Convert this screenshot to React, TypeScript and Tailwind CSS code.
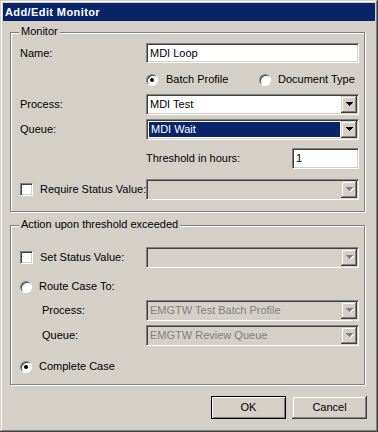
import React from 'react';

const raised =
  'bg-[#d4d0c8] shadow-[inset_-1px_-1px_#404040,inset_1px_1px_#d4d0c8,inset_-2px_-2px_#808080,inset_2px_2px_#ffffff]';
const sunken =
  'border border-[#808080] border-r-white border-b-white shadow-[inset_1px_1px_#404040,inset_-1px_-1px_#d4d0c8]';

function Arrow({ disabled }: { disabled?: boolean }) {
  const d = 'M0 0h7v1H0z M1 1h5v1H1z M2 2h3v1H2z M3 3h1v1H3z';
  return (
    <svg width="8" height="5" viewBox="0 0 8 5" shapeRendering="crispEdges">
      {disabled && <path d={d} fill="#ffffff" transform="translate(1 1)" />}
      <path d={d} fill={disabled ? '#808080' : '#000000'} />
    </svg>
  );
}

function Combo({
  value,
  width = 213,
  disabled,
  selected,
}: {
  value?: string;
  width?: number;
  disabled?: boolean;
  selected?: boolean;
}) {
  return (
    <div
      className={`flex h-[21px] shrink-0 whitespace-nowrap ${sunken} ${disabled ? 'bg-[#d4d0c8] text-[#808080]' : 'bg-white text-black'}`}
      style={{ width }}
    >
      {selected ? (
        <div className="flex-1 ml-[2px] my-[2px] mr-[1px] bg-[#0a246a] text-white flex items-center pl-[2px] leading-none">
          {value}
        </div>
      ) : (
        <div className="flex-1 flex items-center pl-[3px] leading-none">{value}</div>
      )}
      <div className={`w-[16px] h-[17px] mt-[1px] mr-[1px] flex items-center justify-center pl-[1px] ${raised}`}>
        <Arrow disabled={disabled} />
      </div>
    </div>
  );
}

function Edit({ value, width }: { value: string; width: number }) {
  return (
    <div className={`h-[20px] shrink-0 bg-white flex items-center pl-[3px] leading-none ${sunken}`} style={{ width }}>
      {value}
    </div>
  );
}

function Radio({ checked }: { checked?: boolean }) {
  return (
    <div className="w-[12px] h-[12px] shrink-0 rounded-full bg-white border border-[#808080] border-r-white border-b-white shadow-[inset_1px_1px_#404040] flex items-center justify-center">
      {checked && <div className="w-[4px] h-[4px] rounded-full bg-black" />}
    </div>
  );
}

function Check() {
  return <div className={`w-[13px] h-[13px] shrink-0 bg-white ${sunken}`} />;
}

function Group({ title, height, className, children }: { title: string; height: number; className?: string; children: React.ReactNode }) {
  return (
    <div
      className={`relative ml-[7px] w-[355px] border border-[#808080] shadow-[inset_1px_1px_#ffffff,1px_1px_#ffffff] flex flex-col pl-[9px] ${className ?? ''}`}
      style={{ height }}
    >
      <span className="absolute -top-[8px] left-[8px] px-[2px] h-[13px] leading-[13px] bg-[#d4d0c8] whitespace-nowrap">{title}</span>
      {children}
    </div>
  );
}

export default function App() {
  return (
    <div className="w-[378px] h-[432px] bg-[#d4d0c8] p-[3px] flex flex-col text-[11px] text-black whitespace-nowrap font-[family-name:'Liberation_Sans',Arial,sans-serif] shadow-[inset_-1px_-1px_#404040,inset_1px_1px_#d4d0c8,inset_-2px_-2px_#808080,inset_2px_2px_#ffffff]">
      <div className="h-[18px] bg-[#0a246a] flex items-center pl-[2px] text-white font-bold tracking-[0.4px]">
        Add/Edit Monitor
      </div>

      <Group title="Monitor" height={180} className="mt-[11px]">
        <div className="mt-[10px] flex items-center">
          <span className="w-[126px] shrink-0">Name:</span>
          <Edit value="MDI Loop" width={213} />
        </div>
        <div className="mt-[10px] h-[13px] flex items-center">
          <span className="w-[126px] shrink-0" />
          <div className="w-[113px] shrink-0 flex items-center gap-[8px]">
            <Radio checked />
            <span>Batch Profile</span>
          </div>
          <div className="flex items-center gap-[7px]">
            <Radio />
            <span>Document Type</span>
          </div>
        </div>
        <div className="mt-[8px] flex items-center">
          <span className="w-[126px] shrink-0">Process:</span>
          <Combo value="MDI Test" />
        </div>
        <div className="mt-[4px] flex items-center">
          <span className="w-[126px] shrink-0">Queue:</span>
          <Combo value="MDI Wait" selected />
        </div>
        <div className="mt-[8px] flex items-center">
          <span className="w-[126px] shrink-0" />
          <span className="w-[146px] shrink-0">Threshold in hours:</span>
          <div className={`h-[21px] w-[67px] shrink-0 bg-white flex items-center pl-[3px] ${sunken}`}>1</div>
        </div>
        <div className="mt-[10px] flex items-center">
          <div className="w-[126px] shrink-0 flex items-center gap-[7px]">
            <Check />
            <span>Require Status Value:</span>
          </div>
          <Combo disabled />
        </div>
      </Group>

      <Group title="Action upon threshold exceeded" height={160} className="mt-[13px]">
        <div className="mt-[21px] flex items-center">
          <div className="w-[126px] shrink-0 flex items-center gap-[7px]">
            <Check />
            <span>Set Status Value:</span>
          </div>
          <Combo disabled />
        </div>
        <div className="mt-[12px] h-[13px] flex items-center gap-[7px]">
          <Radio />
          <span>Route Case To:</span>
        </div>
        <div className="mt-[7px] flex items-center">
          <span className="w-[126px] shrink-0 pl-[22px]">Process:</span>
          <Combo value="EMGTW Test Batch Profile" disabled />
        </div>
        <div className="mt-[4px] flex items-center">
          <span className="w-[126px] shrink-0 pl-[22px]">Queue:</span>
          <Combo value="EMGTW Review Queue" disabled />
        </div>
        <div className="mt-[14px] h-[13px] flex items-center gap-[7px]">
          <Radio checked />
          <span>Complete Case</span>
        </div>
      </Group>

      <div className="mt-[11px] flex justify-end gap-[6px] pr-[8px]">
        <button className="w-[75px] h-[23px] border border-black bg-[#d4d0c8] shadow-[inset_1px_1px_#ffffff,inset_-1px_-1px_#808080] leading-none">
          OK
        </button>
        <button className={`w-[75px] h-[23px] leading-none ${raised}`}>Cancel</button>
      </div>
    </div>
  );
}
